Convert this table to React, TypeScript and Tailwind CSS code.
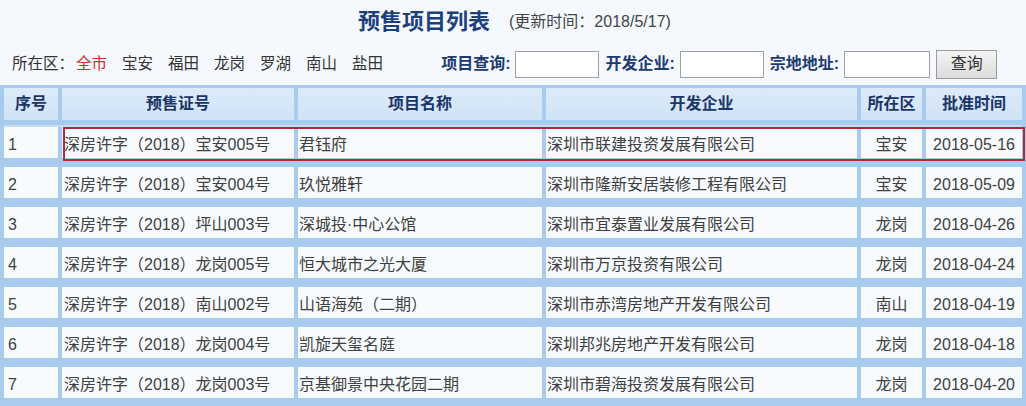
import React from "react";

const rows = [
  ["1", "深房许字（2018）宝安005号", "君钰府", "深圳市联建投资发展有限公司", "宝安", "2018-05-16"],
  ["2", "深房许字（2018）宝安004号", "玖悦雅轩", "深圳市隆新安居装修工程有限公司", "宝安", "2018-05-09"],
  ["3", "深房许字（2018）坪山003号", "深城投·中心公馆", "深圳市宜泰置业发展有限公司", "龙岗", "2018-04-26"],
  ["4", "深房许字（2018）龙岗005号", "恒大城市之光大厦", "深圳市万京投资有限公司", "龙岗", "2018-04-24"],
  ["5", "深房许字（2018）南山002号", "山语海苑（二期）", "深圳市赤湾房地产开发有限公司", "南山", "2018-04-19"],
  ["6", "深房许字（2018）龙岗004号", "凯旋天玺名庭", "深圳邦兆房地产开发有限公司", "龙岗", "2018-04-18"],
  ["7", "深房许字（2018）龙岗003号", "京基御景中央花园二期", "深圳市碧海投资发展有限公司", "龙岗", "2018-04-20"],
];

const districts = ["宝安", "福田", "龙岗", "罗湖", "南山", "盐田"];
const cols = "grid grid-cols-[54px_232px_244px_311px_61px_96px] gap-x-[4px]";

export default function App() {
  return (
    <div
      className="w-[1026px] h-[406px] overflow-hidden bg-[#f5f9fd] text-[#404040]"
      style={{ fontFamily: '"Liberation Sans", "Noto Sans CJK SC", sans-serif' }}
    >
      <div className="h-[41px] pt-[2px] flex items-center pl-[358px]">
        <span className="text-[22px] font-bold text-[#1d3f7b] leading-none">预售项目列表</span>
        <span className="ml-[19px] text-[16px] text-[#444] leading-none">(更新时间：2018/5/17)</span>
      </div>
      <div className="h-[44px] pt-[2px] flex items-center pl-[12px] text-[15.5px]">
        <span className="text-[#333]">所在区：</span>
        <span className="ml-[2px] text-[#c8302f]">全市</span>
        {districts.map((d) => (
          <span key={d} className="ml-[15px] text-[#333]">{d}</span>
        ))}
        <span className="ml-[58px] font-bold text-[16px] text-[#1e3a70]">项目查询:</span>
        <input className="ml-[5px] w-[84px] h-[27px] bg-white border border-[#a0a0a0] outline-none" />
        <span className="ml-[6px] font-bold text-[16px] text-[#1e3a70]">开发企业:</span>
        <input className="ml-[5px] w-[84px] h-[27px] bg-white border border-[#a0a0a0] outline-none" />
        <span className="ml-[6px] font-bold text-[16px] text-[#1e3a70]">宗地地址:</span>
        <input className="ml-[5px] w-[86px] h-[27px] bg-white border border-[#a0a0a0] outline-none" />
        <button className="ml-[6px] w-[61px] h-[29px] border border-[#9a9a9a] bg-gradient-to-b from-[#f4f4f4] to-[#dcdcdc] text-[16px] text-[#333]">
          查询
        </button>
      </div>
      <div className="relative bg-[#a8cbee] pt-[3px] pl-[4px] pr-[4px] pb-[10px]">
        <div className={`${cols} h-[32px]`}>
          {["序号", "预售证号", "项目名称", "开发企业", "所在区", "批准时间"].map((h) => (
            <div
              key={h}
              className="bg-gradient-to-b from-[#dcebfa] to-[#cfe3f6] flex items-center justify-center font-bold text-[16px] text-[#1c3566]"
            >
              {h}
            </div>
          ))}
        </div>
        <div className="h-[7px] border-b-[2px] border-[#c6dcf3]" />
        {rows.map((r, i) => (
          <div key={i} className={`${cols} h-[31px] ${i > 0 ? "mt-[9px]" : ""}`}>
            <div className="bg-[#f8fbfe] flex items-center pt-[5px] pl-[4px] text-[16px]">{r[0]}</div>
            <div className="bg-[#f8fbfe] flex items-center pt-[5px] pl-[2px] text-[16px] whitespace-nowrap">{r[1]}</div>
            <div className="bg-[#f8fbfe] flex items-center pt-[5px] pl-[1px] text-[16px] whitespace-nowrap">{r[2]}</div>
            <div className="bg-[#f8fbfe] flex items-center pt-[5px] pl-[1px] text-[16px] whitespace-nowrap">{r[3]}</div>
            <div className="bg-[#f8fbfe] flex items-center pt-[5px] justify-center text-[16px]">{r[4]}</div>
            <div className="bg-[#f8fbfe] flex items-center pt-[5px] justify-center text-[16px]">{r[5]}</div>
          </div>
        ))}
        <div className="absolute left-[63px] top-[42px] w-[962px] h-[34px] border-2 border-[#ad2a3d] pointer-events-none" />
      </div>
    </div>
  );
}
